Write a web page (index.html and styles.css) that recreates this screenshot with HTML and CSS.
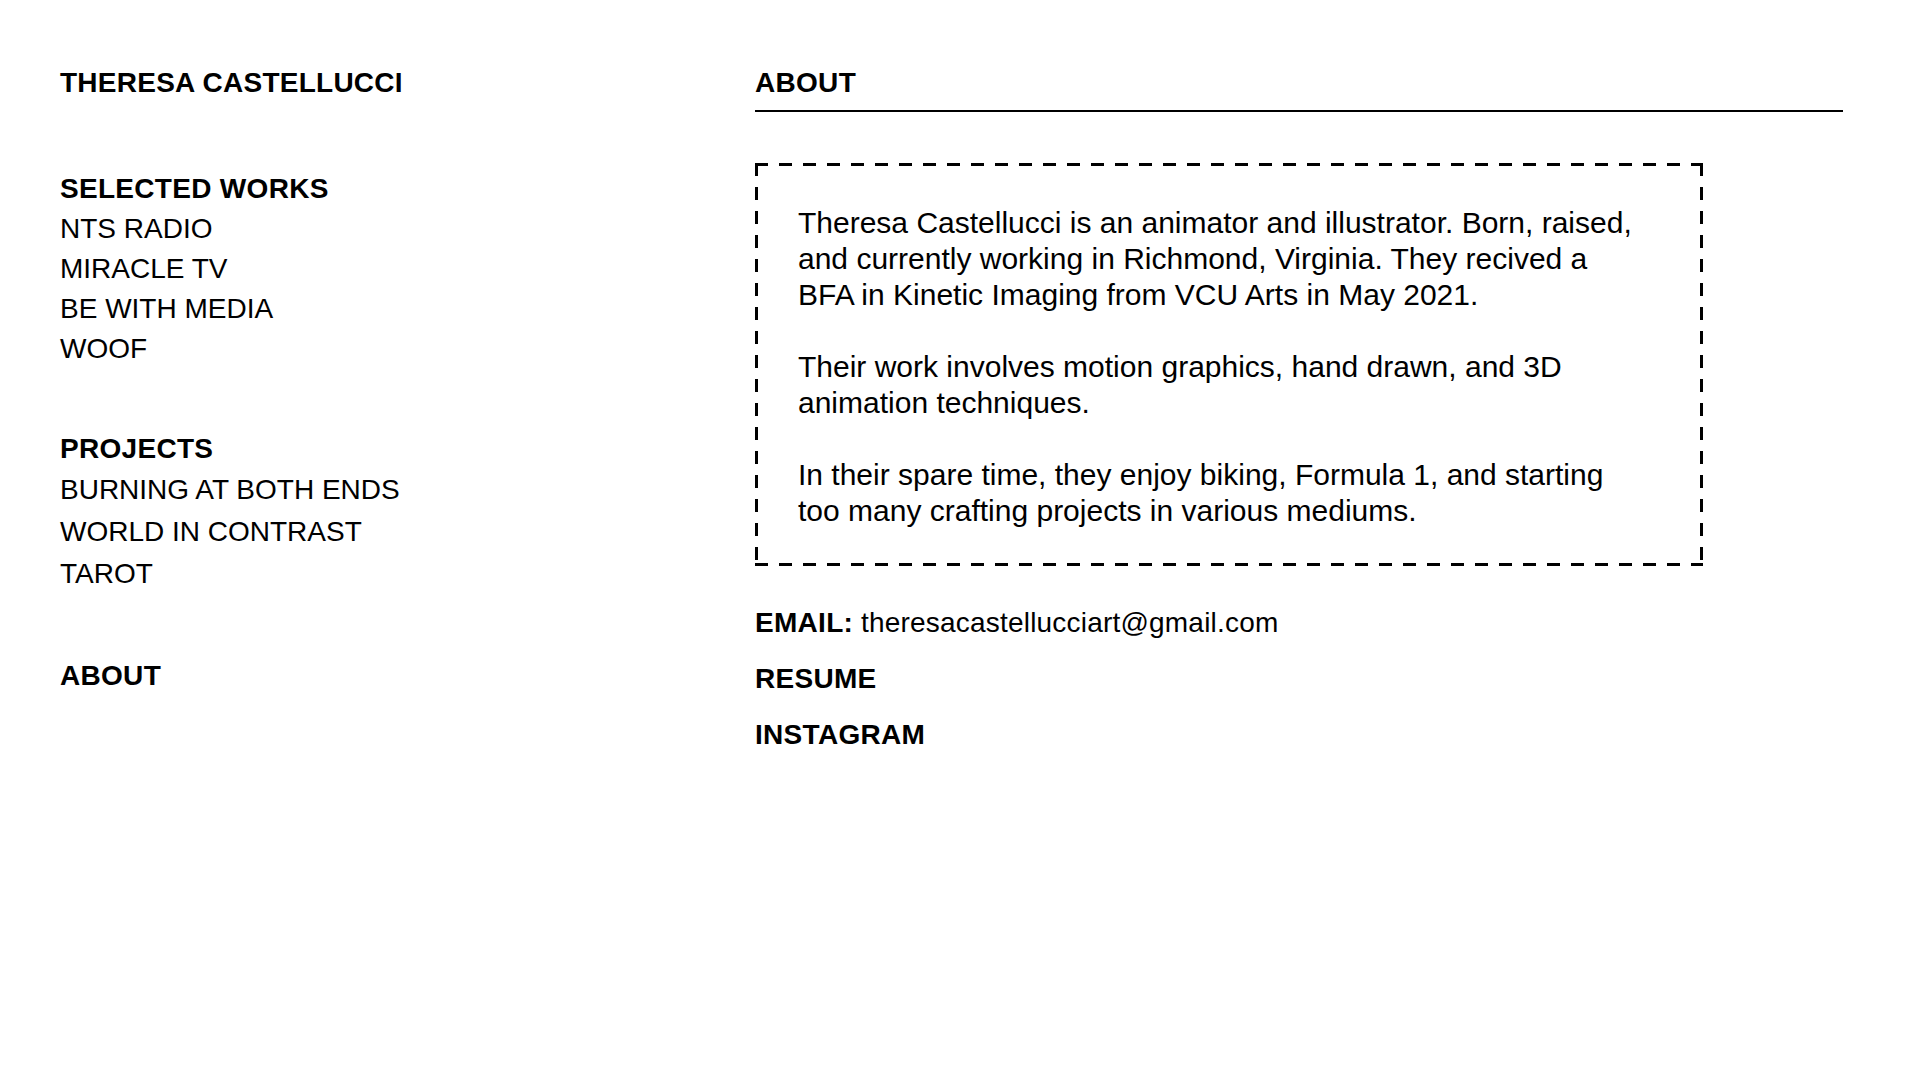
FILE: index.html
```html
<!DOCTYPE html>
<html lang="en">
<head>
<meta charset="utf-8">
<title>Theresa Castellucci — About</title>
<link rel="stylesheet" href="styles.css">
</head>
<body>
<div class="page">
  <aside class="sidebar">
    <h1 class="site-title">THERESA CASTELLUCCI</h1>
    <section class="nav-section works">
      <h2 class="nav-heading">SELECTED WORKS</h2>
      <ul class="nav-list">
        <li>NTS RADIO</li>
        <li>MIRACLE TV</li>
        <li>BE WITH MEDIA</li>
        <li>WOOF</li>
      </ul>
    </section>
    <section class="nav-section projects">
      <h2 class="nav-heading">PROJECTS</h2>
      <ul class="nav-list">
        <li>BURNING AT BOTH ENDS</li>
        <li>WORLD IN CONTRAST</li>
        <li>TAROT</li>
      </ul>
    </section>
    <section class="nav-section">
      <h2 class="nav-heading">ABOUT</h2>
    </section>
  </aside>
  <main class="content">
    <h2 class="content-heading">ABOUT</h2>
    <div class="bio-box">
      <p>Theresa Castellucci is an animator and illustrator. Born, raised, and currently working in Richmond, Virginia. They recived a BFA in Kinetic Imaging from VCU Arts in May 2021.</p>
      <p>Their work involves motion graphics, hand drawn, and 3D animation techniques.</p>
      <p>In their spare time, they enjoy biking, Formula 1, and starting too many crafting projects in various mediums.</p>
    </div>
    <p class="contact email"><strong>EMAIL:</strong> <span class="email-address">theresacastellucciart@gmail.com</span></p>
    <p class="contact link">RESUME</p>
    <p class="contact link">INSTAGRAM</p>
  </main>
</div>
</body>
</html>
```
FILE: styles.css
```css
html, body {
  margin: 0;
  padding: 0;
  background: #ffffff;
}

body {
  font-family: "Liberation Sans", Arial, Helvetica, sans-serif;
  font-size: 28px;
  color: #000000;
}

.page {
  display: flex;
  align-items: flex-start;
  padding: 63px 78px 0 60px;
}

.sidebar {
  flex: none;
  width: 695px;
}

.site-title {
  margin: 0 0 66px;
  font-size: 28px;
  line-height: 40px;
  font-weight: 700;
  letter-spacing: 0.25px;
}

.nav-heading {
  margin: 0;
  font-size: 28px;
  line-height: 40px;
  font-weight: 700;
  letter-spacing: 0.3px;
}

.nav-list {
  list-style: none;
  margin: 0;
  padding: 0;
  line-height: 40px;
}

.works {
  margin-bottom: 60px;
}

.projects {
  margin-bottom: 61px;
}

.projects .nav-list {
  line-height: 42px;
}

.content {
  flex: 1;
  min-width: 0;
}

.content-heading {
  margin: 0;
  font-size: 28px;
  line-height: 40px;
  font-weight: 700;
  letter-spacing: 0.3px;
  padding-bottom: 7px;
  border-bottom: 2px solid #000000;
}

.bio-box {
  box-sizing: border-box;
  width: 948px;
  margin-top: 51px;
  padding: 42px 61px 37px 43px;
  background:
    repeating-linear-gradient(90deg, #000 0 13px, transparent 13px 24px) left top / 100% 3px no-repeat,
    repeating-linear-gradient(90deg, #000 0 13px, transparent 13px 24px) left bottom / 100% 3px no-repeat,
    repeating-linear-gradient(180deg, #000 0 13px, transparent 13px 24px) left top / 3px 100% no-repeat,
    repeating-linear-gradient(180deg, #000 0 13px, transparent 13px 24px) right top / 3px 100% no-repeat;
}

.bio-box p {
  margin: 0;
  font-size: 30px;
  line-height: 36px;
}

.bio-box p + p {
  margin-top: 36px;
}

.contact {
  margin: 20px 0 0;
  line-height: 36px;
}

.contact.email {
  margin-top: 39px;
}

.contact strong,
.contact.link {
  font-weight: 700;
  letter-spacing: 0.3px;
}

.email-address {
  letter-spacing: 0.2px;
}
```
